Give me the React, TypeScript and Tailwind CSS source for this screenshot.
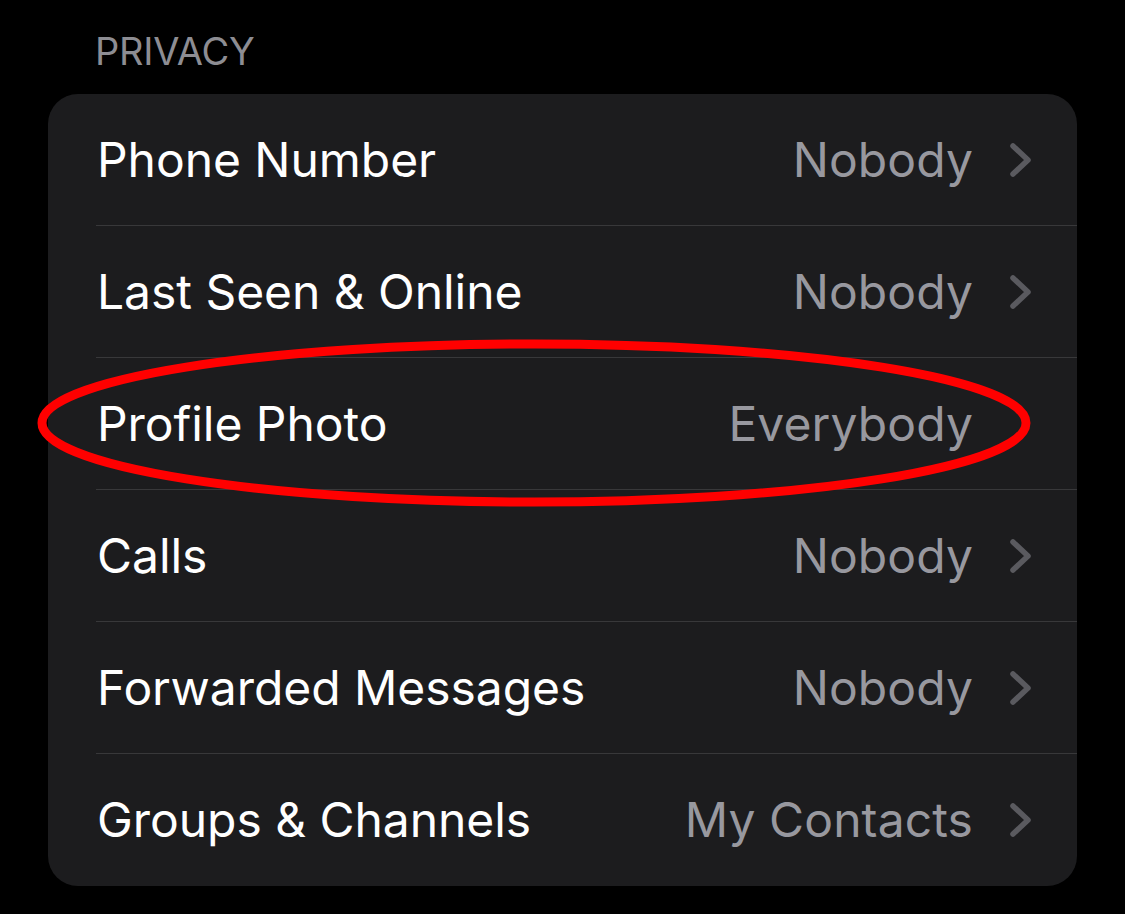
const rows = [
  { label: "Phone Number", value: "Nobody", chevron: true },
  { label: "Last Seen & Online", value: "Nobody", chevron: true },
  { label: "Profile Photo", value: "Everybody", chevron: false },
  { label: "Calls", value: "Nobody", chevron: true },
  { label: "Forwarded Messages", value: "Nobody", chevron: true },
  { label: "Groups & Channels", value: "My Contacts", chevron: true },
];

function Chevron({ hidden }: { hidden?: boolean }) {
  return (
    <svg
      width="24"
      height="36"
      viewBox="0 0 24 36"
      className={hidden ? "invisible" : ""}
      fill="none"
    >
      <path
        d="M4 4 L19 18 L4 32"
        stroke="#5a5a5f"
        strokeWidth="5.5"
        strokeLinecap="round"
        strokeLinejoin="round"
      />
    </svg>
  );
}

export default function App() {
  return (
    <div
      className="relative w-[1125px] h-[914px] overflow-hidden bg-black"
      style={{ fontFamily: "Inter, 'Noto Sans', sans-serif" }}
    >
      <div className="pl-[95px] pt-[27px] pb-[19px] text-[38px] leading-[48px] tracking-[-0.2px] text-[#8d8d93]">
        PRIVACY
      </div>
      <div className="mx-[48px] rounded-[30px] bg-[#1c1c1e] overflow-hidden">
        {rows.map((row, i) => (
          <div key={row.label} className="pl-[48px]">
            <div
              className={
                "flex h-[132px] items-center pr-[44px] " +
                (i < rows.length - 1 ? "border-b border-[#38383a]" : "")
              }
            >
              <span className="flex-1 pl-px text-[48px] tracking-[-0.05px] text-white">
                {row.label}
              </span>
              <span className="text-[48px] tracking-[0.1px] text-[#98989f]">
                {row.value}
              </span>
              <span className="ml-[36px] flex items-center">
                <Chevron hidden={!row.chevron} />
              </span>
            </div>
          </div>
        ))}
      </div>

      {/* red annotation */}
      <svg
        className="pointer-events-none absolute left-0 top-0"
        width="1125"
        height="914"
        viewBox="0 0 1125 914"
        fill="none"
      >
        <ellipse
          cx="534"
          cy="423"
          rx="492"
          ry="79"
          stroke="#ff0000"
          strokeWidth="9"
        />
      </svg>
    </div>
  );
}
